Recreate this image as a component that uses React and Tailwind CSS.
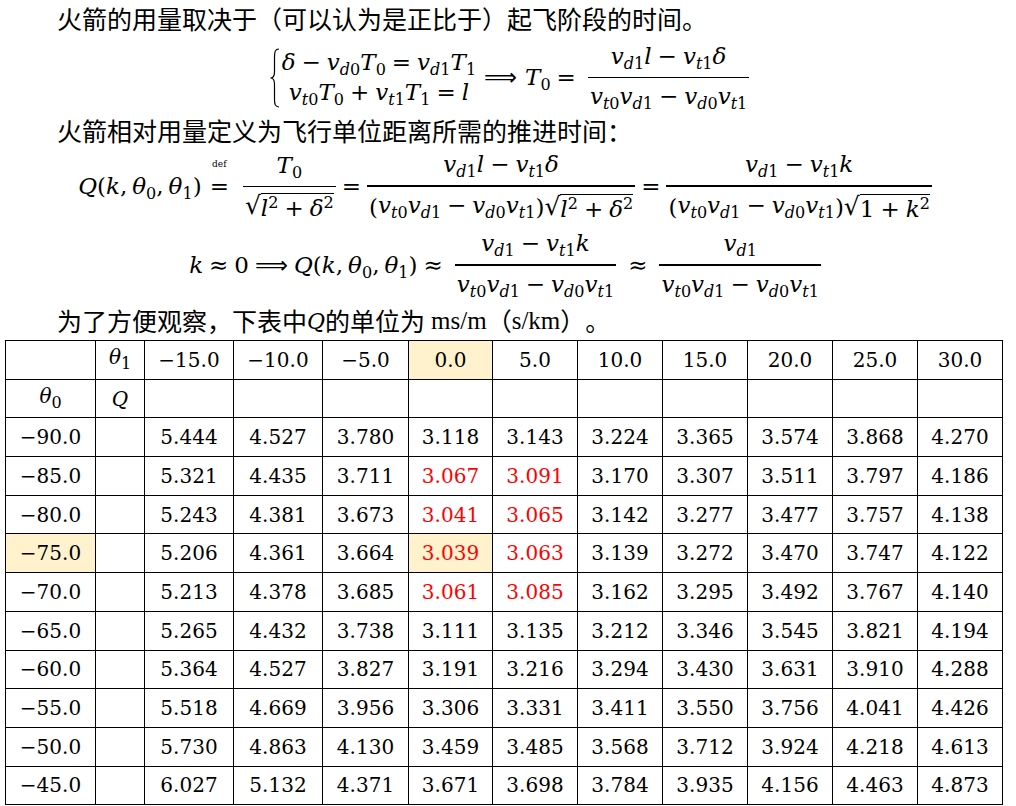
import React from 'react';

const I = ({ children }) => <span className="italic">{children}</span>;
const Sub = ({ children }) => <span className="text-[16px] leading-none align-[-0.3em]">{children}</span>;
const Sup = ({ children }) => <span className="text-[16px] leading-none align-[0.5em]">{children}</span>;
const Op = ({ children }) => <span className="mx-[6px]">{children}</span>;
const Open = ({ children }) => <span className="inline-block w-[1em] text-right">{children}</span>;
const Close = ({ children }) => <span className="inline-block w-[1em] text-left">{children}</span>;

const V = ({ a, n }) => (
    <span>
        <I>v</I>
        <Sub><I>{a}</I>{n}</Sub>
    </span>
);
const T = ({ n }) => (
    <span>
        <I>T</I>
        <Sub>{n}</Sub>
    </span>
);
const Th = ({ n }) => (
    <span>
        <I>θ</I>
        <Sub>{n}</Sub>
    </span>
);

const Frac = ({ n, d }) => (
    <span className="inline-flex flex-col items-stretch mx-[6px]">
        <span className="flex justify-center px-[2px] leading-[27px] pb-[5px]">{n}</span>
        <span className="h-[1.5px] bg-black" />
        <span className="flex justify-center px-[2px] leading-[27px] pt-[5px]">{d}</span>
    </span>
);

const Sqrt = ({ children }) => (
    <span className="inline-flex items-end">
        <span className="text-[25px] leading-[28px] not-italic">√</span>
        <span className="border-t-[1.5px] border-black leading-[24px] pt-[1px]">{children}</span>
    </span>
);

const Q = () => (
    <span>
        <I>Q</I>(<I>k</I>,<span className="ml-[5px]" /><Th n="0" />,<span className="ml-[5px]" /><Th n="1" />)
    </span>
);

const Den = () => (
    <span>
        <V a="t" n="0" />
        <V a="d" n="1" />
        <Op>−</Op>
        <V a="d" n="0" />
        <V a="t" n="1" />
    </span>
);

const Def = () => (
    <span className="relative mx-[8px]">
        <span className="absolute left-1/2 -translate-x-1/2 -top-[9px] text-[9px] leading-none">def</span>
        =
    </span>
);

const head = ['−15.0', '−10.0', '−5.0', '0.0', '5.0', '10.0', '15.0', '20.0', '25.0', '30.0'];
const rows = [
    ['−90.0', '5.444', '4.527', '3.780', '3.118', '3.143', '3.224', '3.365', '3.574', '3.868', '4.270'],
    ['−85.0', '5.321', '4.435', '3.711', '3.067', '3.091', '3.170', '3.307', '3.511', '3.797', '4.186'],
    ['−80.0', '5.243', '4.381', '3.673', '3.041', '3.065', '3.142', '3.277', '3.477', '3.757', '4.138'],
    ['−75.0', '5.206', '4.361', '3.664', '3.039', '3.063', '3.139', '3.272', '3.470', '3.747', '4.122'],
    ['−70.0', '5.213', '4.378', '3.685', '3.061', '3.085', '3.162', '3.295', '3.492', '3.767', '4.140'],
    ['−65.0', '5.265', '4.432', '3.738', '3.111', '3.135', '3.212', '3.346', '3.545', '3.821', '4.194'],
    ['−60.0', '5.364', '4.527', '3.827', '3.191', '3.216', '3.294', '3.430', '3.631', '3.910', '4.288'],
    ['−55.0', '5.518', '4.669', '3.956', '3.306', '3.331', '3.411', '3.550', '3.756', '4.041', '4.426'],
    ['−50.0', '5.730', '4.863', '4.130', '3.459', '3.485', '3.568', '3.712', '3.924', '4.218', '4.613'],
    ['−45.0', '6.027', '5.132', '4.371', '3.671', '3.698', '3.784', '3.935', '4.156', '4.463', '4.873'],
];
const widths = [90, 49, 89, 89, 86, 84, 85, 85, 85, 85, 85, 85];
const cell = 'border border-black text-center p-0 h-[38.7px]';
const cjk = "font-['Noto_Sans_CJK_SC',sans-serif] text-[25px] [text-spacing-trim:space-all]";

export default function App() {
    return (
        <div className="w-[1016px] h-[806px] bg-white text-black overflow-hidden font-['DejaVu_Serif',serif]">
            <div className={`h-[37px] pl-[57px] flex items-center whitespace-nowrap ${cjk}`}>
                <span>火箭的用量取决于</span>
                <Open>（</Open>
                <span>可以认为是正比于</span>
                <Close>）</Close>
                <span>起飞阶段的时间</span>
                <Close>。</Close>
            </div>

            <div className="h-[81px] flex items-center justify-center pl-[8px] text-[23px]">
                <svg width="12" height="62" viewBox="0 0 12 62" className="mr-[1px]">
                    <path d="M10 2 C6 2 5.5 5 5.5 10 L5.5 25 C5.5 29 4 31 1.5 31 C4 31 5.5 33 5.5 37 L5.5 52 C5.5 57 6 60 10 60" fill="none" stroke="black" strokeWidth="1.2" />
                </svg>
                <span className="flex flex-col items-center leading-[28px]">
                    <span>
                        <I>δ</I><Op>−</Op><V a="d" n="0" /><T n="0" /><Op>=</Op><V a="d" n="1" /><T n="1" />
                    </span>
                    <span>
                        <V a="t" n="0" /><T n="0" /><Op>+</Op><V a="t" n="1" /><T n="1" /><Op>=</Op><I>l</I>
                    </span>
                </span>
                <span className="mx-[8px] font-['DejaVu_Sans',sans-serif]">⟹</span>
                <T n="0" />
                <Op>=</Op>
                <Frac
                    n={<span><V a="d" n="1" /><I>l</I><Op>−</Op><V a="t" n="1" /><I>δ</I></span>}
                    d={<Den />}
                />
            </div>

            <div className={`h-[26px] pl-[57px] flex items-center whitespace-nowrap ${cjk}`}>
                <span>火箭相对用量定义为飞行单位距离所需的推进时间</span>
                <Close>：</Close>
            </div>

            <div className="h-[84px] flex items-center justify-center text-[23px]">
                <Q />
                <Def />
                <Frac
                    n={<T n="0" />}
                    d={<Sqrt><I>l</I><Sup>2</Sup><Op>+</Op><I>δ</I><Sup>2</Sup></Sqrt>}
                />
                <span>=</span>
                <Frac
                    n={<span><V a="d" n="1" /><I>l</I><Op>−</Op><V a="t" n="1" /><I>δ</I></span>}
                    d={<span className="inline-flex items-end">(<Den />)<Sqrt><I>l</I><Sup>2</Sup><Op>+</Op><I>δ</I><Sup>2</Sup></Sqrt></span>}
                />
                <span>=</span>
                <Frac
                    n={<span><V a="d" n="1" /><Op>−</Op><V a="t" n="1" /><I>k</I></span>}
                    d={<span className="inline-flex items-end">(<Den />)<Sqrt>1<Op>+</Op><I>k</I><Sup>2</Sup></Sqrt></span>}
                />
            </div>

            <div className="h-[74px] flex items-center justify-center text-[23px]">
                <I>k</I>
                <Op>≈</Op>
                <span>0</span>
                <span className="mx-[6px] font-['DejaVu_Sans',sans-serif]">⟹</span>
                <Q />
                <Op>≈</Op>
                <Frac
                    n={<span><V a="d" n="1" /><Op>−</Op><V a="t" n="1" /><I>k</I></span>}
                    d={<Den />}
                />
                <Op>≈</Op>
                <Frac n={<V a="d" n="1" />} d={<Den />} />
            </div>

            <div className={`h-[38px] pl-[57px] flex items-center whitespace-nowrap ${cjk}`}>
                <span>为了方便观察</span>
                <Close>，</Close>
                <span>下表中</span>
                <span className="italic font-['DejaVu_Serif',serif] text-[22px]">Q</span>
                <span>的单位为</span>
                <span className="font-['Liberation_Serif',serif] text-[25px] ml-[6px]">ms/m</span>
                <Open>（</Open>
                <span className="font-['Liberation_Serif',serif] text-[25px]">s/km</span>
                <Close>）</Close>
                <Close>。</Close>
            </div>

            <table className="ml-[5px] border-collapse table-fixed text-[20px] leading-none w-[998px]">
                <colgroup>
                    {widths.map((w, i) => (
                        <col key={i} style={{ width: w }} />
                    ))}
                </colgroup>
                <tbody>
                    <tr>
                        <td className={cell} />
                        <td className={cell}><Th n="1" /></td>
                        {head.map((h, i) => (
                            <td key={i} className={`${cell} ${h === '0.0' ? 'bg-[#fff2cc]' : ''}`}>{h}</td>
                        ))}
                    </tr>
                    <tr>
                        <td className={cell}><Th n="0" /></td>
                        <td className={cell}><I>Q</I></td>
                        {head.map((h, i) => (
                            <td key={i} className={cell} />
                        ))}
                    </tr>
                    {rows.map((r, ri) => (
                        <tr key={ri}>
                            <td className={`${cell} ${r[0] === '−75.0' ? 'bg-[#fff2cc]' : ''}`}>{r[0]}</td>
                            <td className={cell} />
                            {r.slice(1).map((val, ci) => {
                                const red = ri >= 1 && ri <= 4 && (ci === 3 || ci === 4);
                                const hl = ri === 3 && ci === 3;
                                return (
                                    <td key={ci} className={`${cell} ${red ? 'text-[#ff0000]' : ''} ${hl ? 'bg-[#fff2cc]' : ''}`}>
                                        {val}
                                    </td>
                                );
                            })}
                        </tr>
                    ))}
                </tbody>
            </table>
        </div>
    );
}
